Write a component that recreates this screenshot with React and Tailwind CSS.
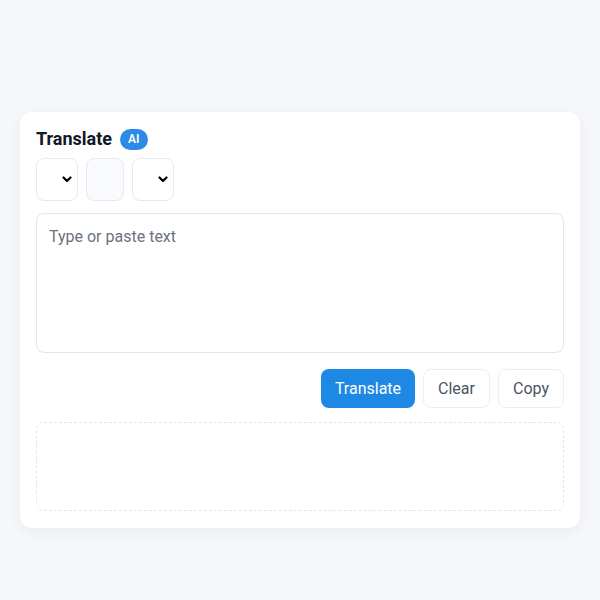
import React from 'react';

const Chevron = () => (
    <svg width="10" height="7" viewBox="0 0 10 7" className="text-black">
        <path d="M1.5 1.5 L5 5 L8.5 1.5" fill="none" stroke="currentColor" strokeWidth="2.2" strokeLinecap="round" strokeLinejoin="round" />
    </svg>
);

const SelectBox = () => (
    <div className="w-[42px] h-[43px] rounded-lg border border-[#e6e9ee] bg-white flex items-center justify-end pr-[5px]">
        <Chevron />
    </div>
);

export default function App() {
    return (
        <div className="min-h-[600px] bg-[#f5f7fa] pt-[112px] px-5" style={{ fontFamily: 'Roboto, "Noto Sans", sans-serif' }}>
            <div className="bg-white rounded-xl shadow-[0_4px_14px_rgba(0,0,0,0.05)] px-4 pt-4 pb-[17px]">
                <div className="flex items-center gap-2 h-[22px]">
                    <h2 className="text-[18px] font-bold text-[#111827] leading-[22px]">Translate</h2>
                    <span className="h-[21px] px-2 rounded-full bg-[#2b8be6] text-white text-[12px] font-semibold flex items-center">AI</span>
                </div>

                <div className="flex gap-2 mt-2">
                    <SelectBox />
                    <div className="w-[38px] h-[43px] rounded-lg border border-[#e6e9ee] bg-[#f8fafd]"></div>
                    <SelectBox />
                </div>

                <div className="mt-3 h-[140px] rounded-lg border border-[#e3e6eb] px-3 py-3">
                    <div className="text-[16px] text-[#6b7280] leading-[22px]">Type or paste text</div>
                </div>

                <div className="flex justify-end gap-2 mt-4">
                    <button className="h-[39px] px-[14px] rounded-lg bg-[#1e88e5] text-white text-[16px]">Translate</button>
                    <button className="h-[39px] px-[14px] rounded-lg border border-[#eceef1] bg-white text-[#4b5563] text-[16px]">Clear</button>
                    <button className="h-[39px] px-[14px] rounded-lg border border-[#eceef1] bg-white text-[#4b5563] text-[16px]">Copy</button>
                </div>

                <div className="mt-[14px] h-[89px] rounded-lg border border-dashed border-[#e3e6eb]"></div>
            </div>
        </div>
    );
}
